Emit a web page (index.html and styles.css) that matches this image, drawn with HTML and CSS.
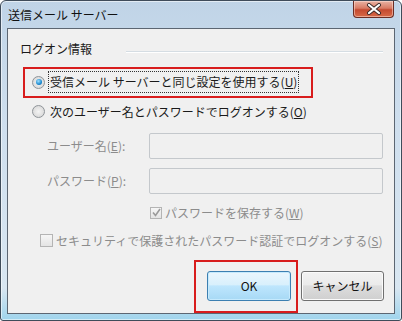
FILE: index.html
```html
<!DOCTYPE html>
<html lang="ja">
<head>
    <meta charset="UTF-8">
    <title>送信メール サーバー</title>
    <link rel="stylesheet" href="styles.css">
</head>
<body>
    <div class="window">
        <div class="titlebar">
            <span class="title">送信メール サーバー</span>
            <div class="close-btn">
                <svg width="16" height="12" viewBox="0 0 16 12">
                    <path d="M3 2 L13 10 M13 2 L3 10" stroke="#3a2a28" stroke-width="4" stroke-linecap="round"/>
                    <path d="M3 2 L13 10 M13 2 L3 10" stroke="#fff" stroke-width="2.2" stroke-linecap="round"/>
                </svg>
            </div>
        </div>
        <div class="client">
            <div class="group-head">
                <span>ログオン情報</span>
                <span class="group-line"></span>
            </div>

            <div class="mark mark-radio">
                <label class="option">
                    <span class="radio checked"></span>
                    <span class="focus">受信メール サーバーと同じ設定を使用する(<u>U</u>)</span>
                </label>
            </div>

            <label class="option option-2">
                <span class="radio"></span>
                <span class="text">次のユーザー名とパスワードでログオンする(<u>O</u>)</span>
            </label>

            <div class="field first">
                <span class="field-label">ユーザー名(<u>E</u>):</span>
                <span class="input"></span>
            </div>
            <div class="field">
                <span class="field-label">パスワード(<u>P</u>):</span>
                <span class="input"></span>
            </div>

            <label class="check save-pass">
                <span class="box">
                    <svg width="9" height="9" viewBox="0 0 9 9">
                        <path d="M1 4.5 L3.5 7.5 L8 1" fill="none" stroke="#9a9a9a" stroke-width="1.6"/>
                    </svg>
                </span>
                <span>パスワードを保存する(<u>W</u>)</span>
            </label>

            <label class="check spa">
                <span class="box"></span>
                <span>セキュリティで保護されたパスワード認証でログオンする(<u>S</u>)</span>
            </label>

            <div class="buttons">
                <div class="mark mark-ok">
                    <button class="btn btn-ok">OK</button>
                </div>
                <button class="btn btn-cancel">キャンセル</button>
            </div>
        </div>
    </div>
</body>
</html>
```

FILE: styles.css
```css
body {
    margin: 0;
    width: 402px;
    height: 321px;
    overflow: hidden;
    background: #fff;
    font-family: "Noto Sans CJK JP", "Noto Sans", sans-serif;
    font-size: 12px;
    color: #1a1a1a;
}
.window {
    box-sizing: border-box;
    width: 402px;
    height: 321px;
    border: 1px solid #3f4c5a;
    border-radius: 6px 6px 3px 3px;
    background: linear-gradient(#c0d4e7, #cfdfee 40%, #d8e6f1 90%, #9fd4ec);
    display: flex;
    flex-direction: column;
    box-shadow: inset 0 0 0 1px rgba(255, 255, 255, 0.55);
}
.titlebar {
    height: 26px;
    display: flex;
    justify-content: space-between;
    align-items: flex-start;
}
.title {
    margin: 6px 0 0 7px;
    line-height: 16px;
    color: #111;
}
.close-btn {
    width: 41px;
    height: 17px;
    margin-right: 7px;
    box-sizing: border-box;
    border: 1px solid #6b2d24;
    border-top: none;
    border-radius: 0 0 4px 4px;
    background: linear-gradient(#e9b3a4, #d97b64 45%, #c44a30 55%, #d86a48);
    display: flex;
    align-items: center;
    justify-content: center;
    box-shadow: inset 0 0 0 1px rgba(255, 230, 220, 0.5);
}
.client {
    margin: 1px 6px 6px 6px;
    height: 287px;
    box-sizing: border-box;
    border: 1px solid #5c6672;
    background: #f0f0f0;
    display: flex;
    flex-direction: column;
    align-items: flex-start;
    padding-top: 12px;
}
.group-head {
    align-self: stretch;
    display: flex;
    align-items: center;
    height: 16px;
    line-height: 16px;
    padding-left: 12px;
    padding-right: 11px;
    color: #1a1a1a;
}
.group-line {
    flex: 1;
    height: 1px;
    margin-left: 34px;
    margin-top: 6px;
    background: #d5dde3;
    border-bottom: 1px solid #fff;
}
.mark {
    border: 2px solid #d81c1c;
    box-sizing: border-box;
}
.mark-radio {
    margin: 10px 0 0 15px;
    width: 290px;
    height: 31px;
    display: flex;
    align-items: center;
    padding-left: 7px;
}
.option {
    display: flex;
    align-items: center;
    line-height: 16px;
}
.option-2 {
    margin: 4px 0 0 24px;
    height: 20px;
}
.radio {
    width: 13px;
    height: 13px;
    box-sizing: border-box;
    border-radius: 50%;
    border: 1px solid #8f9499;
    background: radial-gradient(circle at 50% 50%, #f4f4f4, #dcdcdc 70%, #c6c6c6);
    display: flex;
    align-items: center;
    justify-content: center;
    margin-right: 3px;
}
.radio.checked::after {
    content: "";
    width: 6px;
    height: 6px;
    border-radius: 50%;
    background: radial-gradient(circle at 40% 35%, #9fe0ff, #1b8ad0 60%, #0c4f8c);
}
.focus {
    outline: 1px dotted #333;
    outline-offset: 0;
    padding: 2px 1px;
    margin-left: 1px;
}
.text {
    margin-left: 2px;
}
.field {
    display: flex;
    align-items: center;
    margin-top: 9px;
    padding-left: 39px;
}
.field.first {
    margin-top: 11px;
}
.field-label {
    width: 102px;
    color: #8c8c8c;
    line-height: 16px;
}
.input {
    width: 234px;
    height: 26px;
    box-sizing: border-box;
    border: 1px solid #c4c8cc;
    border-radius: 2px;
    background: #f0f0f0;
}
.check {
    display: flex;
    align-items: center;
    height: 16px;
    line-height: 16px;
    color: #8c8c8c;
}
.save-pass {
    margin: 11px 0 0 142px;
}
.spa {
    margin: 12px 0 0 32px;
}
.box {
    width: 12px;
    height: 12px;
    box-sizing: border-box;
    border: 1px solid #b4b4b4;
    background: linear-gradient(#f6f6f6, #e4e4e4);
    margin-right: 3px;
    display: flex;
    align-items: center;
    justify-content: center;
}
.spa .box {
    width: 13px;
    height: 13px;
}
.buttons {
    align-self: stretch;
    display: flex;
    justify-content: flex-end;
    align-items: flex-start;
    margin-top: 11px;
    padding-right: 10px;
}
.mark-ok {
    width: 104px;
    height: 53px;
    padding: 9px 5px 0 11px;
}
.btn {
    font-family: "Noto Sans CJK JP", "Noto Sans", sans-serif;
    font-size: 12px;
    color: #111;
    height: 30px;
    border-radius: 3px;
    padding: 0;
    box-sizing: border-box;
}
.btn-ok {
    width: 84px;
    border: 1px solid #3c7fb1;
    background: linear-gradient(#eaf6fd, #d9f0fc 45%, #bee6fd 50%, #a7d9f5);
    box-shadow: inset 0 0 0 1px #c6eafd;
}
.btn-cancel {
    width: 83px;
    margin-top: 11px;
    margin-left: 3px;
    border: 1px solid #707070;
    background: linear-gradient(#f2f2f2, #ebebeb 45%, #dddddd 50%, #cfcfcf);
    box-shadow: inset 0 0 0 1px #fbfbfb;
}
```
